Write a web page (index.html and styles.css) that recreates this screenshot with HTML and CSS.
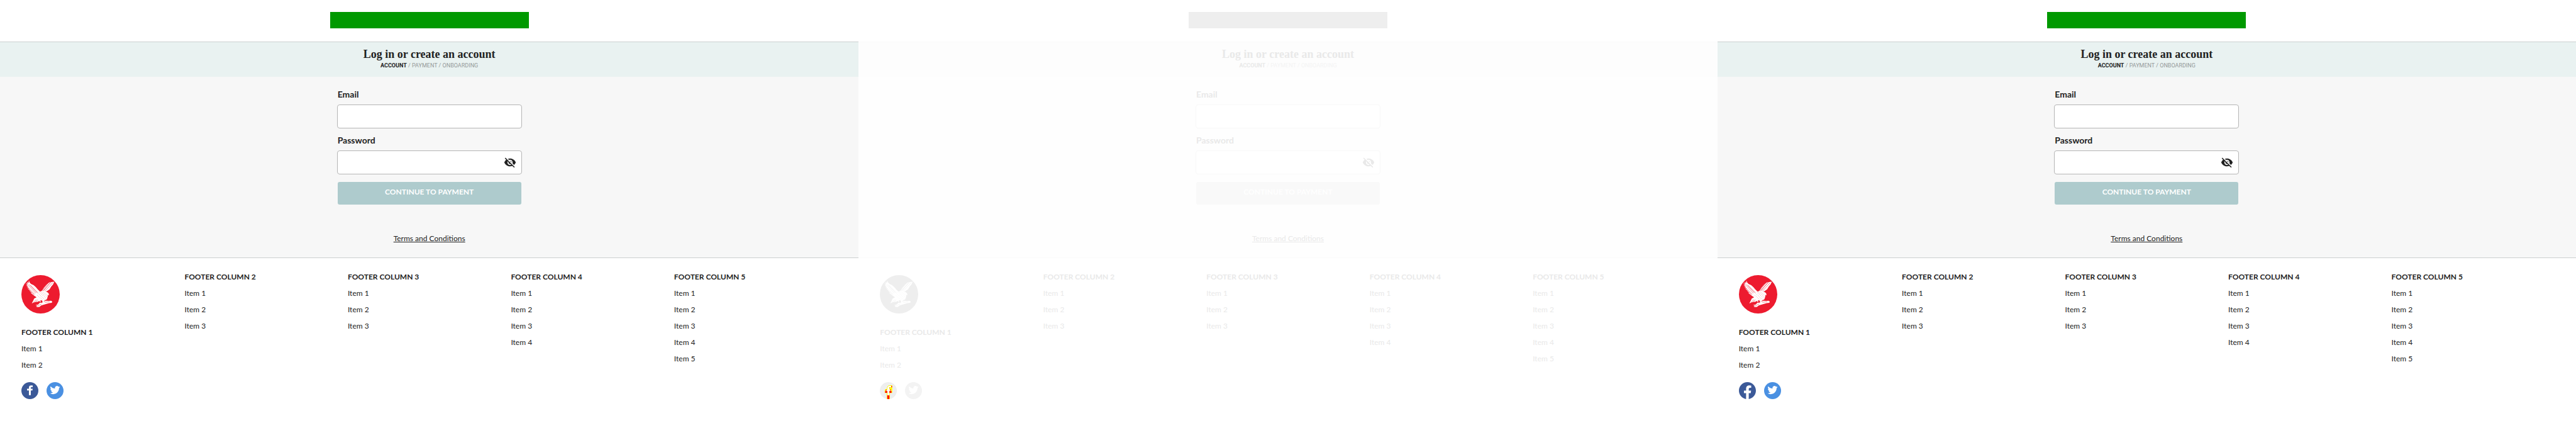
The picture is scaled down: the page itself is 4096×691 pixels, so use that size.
FILE: index.html
```html
<!DOCTYPE html>
<html lang="en">
<head>
<meta charset="utf-8">
<title>Log in or create an account</title>
<link rel="stylesheet" href="styles.css">
</head>
<body>
<svg class="sprite" aria-hidden="true">
  <symbol id="eagle" viewBox="0 0 72 72">
    <circle class="logo-disc" cx="36" cy="36" r="36"/>
    <g class="glyph">
      <path d="M14 10 15.5 14 18 16.5 23 19 27 22.500 31 27 35 31 38.500 29.500 43 30 48 31.500 51 34 52 38 50 37 49.500 40 48 45 44 47.500 42 49 43 52 40 50.500 38.500 47.500 36 47 36 51 33.500 48.500 31 50 27 50.500 24 51 19.500 53 22 48.500 24 44 28.500 41.500 24.500 39 20 35.500 17 32.500 20 33 14 28.500 17.500 29.500 11 25 15 26 9.500 21.500 13 22.500 8.500 18 12 19.500 7.500 14 11.500 17 11 12.500 13.500 15Z"/>
      <path d="M38 30 42 24 47 18 52 14 56.500 13 61.700 12.500 59.500 17.500 56 21.500 53 26.500 48 30 43 31.500Z"/>
      <path d="M26.500 56 31 55.500 35 51.500 38 52 42 49.500 46 48 51 48.500 56 48 58 50 57 52 52 52.500 47 54 42 55.500 37 57 34 59.500 30 60 27.500 59 30 57.500Z"/>
    </g>
    <g class="feathers">
      <path d="M12 18 27 34M14 17 29 33M10 21 25 36M17 19 31 33M12 26 24 37M40 30 56 13M42 29 54 14M44 30 59 14M39 29 51 14"/>
      <path class="speckle" d="M31 34 45 47M34 32 48 45M37 32 50 42M30 38 41 48M41 32 49 38"/>
      <path d="M28 46 22 52M31 46 26 51M30 58 38 54M44 51 53 50"/>
    </g>
  </symbol>
  <symbol id="eye-off" viewBox="0 0 24 24">
    <path d="M12 7c2.760 0 5 2.240 5 5 0 .650-.130 1.260-.360 1.830l2.920 2.920c1.510-1.260 2.700-2.890 3.430-4.750-1.730-4.390-6-7.500-11-7.500-1.400 0-2.740.250-3.980.700l2.160 2.160C10.740 7.130 11.350 7 12 7zM2 4.270l2.280 2.280.460.460C3.080 8.300 1.780 10.020 1 12c1.730 4.390 6 7.500 11 7.500 1.550 0 3.030-.300 4.380-.840l.420.420L19.730 22 21 20.730 3.270 3 2 4.270zM7.530 9.800l1.550 1.550c-.050.210-.080.430-.080.650 0 1.660 1.340 3 3 3 .220 0 .440-.030.650-.080l1.550 1.550c-.670.330-1.410.530-2.200.530-2.760 0-5-2.240-5-5 0-.790.200-1.530.530-2.200zm4.310-.780l3.150 3.150.020-.160c0-1.660-1.340-3-3-3l-.170.010z"/>
  </symbol>
  <symbol id="facebook-small" viewBox="0 0 32 32">
    <circle class="facebook-disc" cx="16" cy="16" r="16"/>
    <path class="glyph" d="M14.200 24.700V15.700H10.700V12.300H14.200V10.500C14.200 7.500 15.800 6.300 18.300 6.300H21.300V9.500H19.300C18.200 9.500 17.800 10 17.800 11V12.300H21.300L20.800 15.700H17.800V24.700Z"/>
  </symbol>
  <symbol id="facebook-full" viewBox="0 0 24 24">
    <path class="facebook-disc" d="M24 12.073c0-6.627-5.373-12-12-12s-12 5.373-12 12c0 5.990 4.388 10.954 10.125 11.854v-8.385H7.078v-3.470h3.047V9.430c0-3.007 1.792-4.669 4.533-4.669 1.312 0 2.686.235 2.686.235v2.953H15.830c-1.491 0-1.956.925-1.956 1.874v2.250h3.328l-.532 3.470h-2.796v8.385C19.612 23.027 24 18.062 24 12.073z"/>
  </symbol>
  <symbol id="facebook-diff" viewBox="0 0 32 32">
    <circle class="facebook-disc" cx="16" cy="16" r="16"/>
    <path class="diff-edge" d="M13 32V20.300H9.300V15L10.700 13H13.300V10.500L15 7.500 17 6H23.300V20.300H19V32Z"/>
    <path class="glyph" d="M14.300 25V16.500H11L14.300 13.500V10.500L16.500 7H21.300V9.500H18.500L17.700 11V13L22 16.500H18V25Z"/>
    <path class="diff-mark" d="M10 17H14V20H10ZM18 17H22V20H18ZM14 25H18V31L17 32H15L14 31ZM11 14.500H13.500L12.500 16H11ZM19 14H20.500V16H19ZM21.300 7H23V10H22ZM18 10H19V11H18Z"/>
  </symbol>
  <symbol id="twitter" viewBox="0 0 32 32">
    <circle class="twitter-disc" cx="16" cy="16" r="16"/>
    <path class="glyph" transform="translate(6.500 5.500) scale(.79)" d="M23.953 4.570a10 10 0 01-2.825.775 4.958 4.958 0 002.163-2.723c-.951.555-2.005.959-3.127 1.184a4.920 4.920 0 00-8.384 4.482C7.690 8.095 4.067 6.130 1.640 3.162a4.822 4.822 0 00-.666 2.475c0 1.710.870 3.213 2.188 4.096a4.904 4.904 0 01-2.228-.616v.060a4.923 4.923 0 003.946 4.827 4.996 4.996 0 01-2.212.085 4.936 4.936 0 004.604 3.417 9.867 9.867 0 01-6.102 2.105c-.390 0-.779-.023-1.170-.067a13.995 13.995 0 007.557 2.209c9.053 0 13.998-7.496 13.998-13.985 0-.210 0-.420-.015-.630A9.935 9.935 0 0024 4.590z"/>
  </symbol>
</svg>

<div class="panes">
  <section class="pane">
    <header class="topbar"><div class="brand-bar"></div></header>
    <div class="intro">
      <h1 class="title">Log in or create an account</h1>
      <p class="steps"><strong class="step-current">ACCOUNT</strong> / PAYMENT / ONBOARDING</p>
    </div>
    <main class="content">
      <form class="form">
        <div class="field"><label class="label" for="email-a">Email</label><input class="input" id="email-a" type="email"></div>
        <div class="field"><label class="label" for="password-a">Password</label>
          <div class="input-wrap"><input class="input" id="password-a" type="password"><button class="toggle" type="button" aria-label="Show password"><svg class="eye"><use href="#eye-off"/></svg></button></div>
        </div>
        <button class="submit" type="button">CONTINUE TO PAYMENT</button>
      </form>
      <a class="terms" href="#">Terms and Conditions</a>
    </main>
    <footer class="footer">
      <div class="column">
        <svg class="logo"><use href="#eagle"/></svg>
        <h2 class="heading">FOOTER COLUMN 1</h2>
        <ul class="list"><li><a class="item" href="#">Item 1</a></li><li><a class="item" href="#">Item 2</a></li></ul>
        <div class="social"><a class="social-link" href="#" aria-label="Facebook"><svg class="social-icon"><use href="#facebook-small"/></svg></a><a class="social-link" href="#" aria-label="Twitter"><svg class="social-icon"><use href="#twitter"/></svg></a></div>
      </div>
      <div class="column"><h2 class="heading">FOOTER COLUMN 2</h2>
        <ul class="list"><li><a class="item" href="#">Item 1</a></li><li><a class="item" href="#">Item 2</a></li><li><a class="item" href="#">Item 3</a></li></ul></div>
      <div class="column"><h2 class="heading">FOOTER COLUMN 3</h2>
        <ul class="list"><li><a class="item" href="#">Item 1</a></li><li><a class="item" href="#">Item 2</a></li><li><a class="item" href="#">Item 3</a></li></ul></div>
      <div class="column"><h2 class="heading">FOOTER COLUMN 4</h2>
        <ul class="list"><li><a class="item" href="#">Item 1</a></li><li><a class="item" href="#">Item 2</a></li><li><a class="item" href="#">Item 3</a></li><li><a class="item" href="#">Item 4</a></li></ul></div>
      <div class="column"><h2 class="heading">FOOTER COLUMN 5</h2>
        <ul class="list"><li><a class="item" href="#">Item 1</a></li><li><a class="item" href="#">Item 2</a></li><li><a class="item" href="#">Item 3</a></li><li><a class="item" href="#">Item 4</a></li><li><a class="item" href="#">Item 5</a></li></ul></div>
    </footer>
  </section>

  <section class="pane faded">
    <header class="topbar"><div class="brand-bar"></div></header>
    <div class="intro">
      <h1 class="title">Log in or create an account</h1>
      <p class="steps"><strong class="step-current">ACCOUNT</strong> / PAYMENT / ONBOARDING</p>
    </div>
    <main class="content">
      <form class="form">
        <div class="field"><label class="label" for="email-b">Email</label><input class="input" id="email-b" type="email"></div>
        <div class="field"><label class="label" for="password-b">Password</label>
          <div class="input-wrap"><input class="input" id="password-b" type="password"><button class="toggle" type="button" aria-label="Show password"><svg class="eye"><use href="#eye-off"/></svg></button></div>
        </div>
        <button class="submit" type="button">CONTINUE TO PAYMENT</button>
      </form>
      <a class="terms" href="#">Terms and Conditions</a>
    </main>
    <footer class="footer">
      <div class="column">
        <svg class="logo"><use href="#eagle"/></svg>
        <h2 class="heading">FOOTER COLUMN 1</h2>
        <ul class="list"><li><a class="item" href="#">Item 1</a></li><li><a class="item" href="#">Item 2</a></li></ul>
        <div class="social"><a class="social-link" href="#" aria-label="Facebook"><svg class="social-icon"><use href="#facebook-diff"/></svg></a><a class="social-link" href="#" aria-label="Twitter"><svg class="social-icon"><use href="#twitter"/></svg></a></div>
      </div>
      <div class="column"><h2 class="heading">FOOTER COLUMN 2</h2>
        <ul class="list"><li><a class="item" href="#">Item 1</a></li><li><a class="item" href="#">Item 2</a></li><li><a class="item" href="#">Item 3</a></li></ul></div>
      <div class="column"><h2 class="heading">FOOTER COLUMN 3</h2>
        <ul class="list"><li><a class="item" href="#">Item 1</a></li><li><a class="item" href="#">Item 2</a></li><li><a class="item" href="#">Item 3</a></li></ul></div>
      <div class="column"><h2 class="heading">FOOTER COLUMN 4</h2>
        <ul class="list"><li><a class="item" href="#">Item 1</a></li><li><a class="item" href="#">Item 2</a></li><li><a class="item" href="#">Item 3</a></li><li><a class="item" href="#">Item 4</a></li></ul></div>
      <div class="column"><h2 class="heading">FOOTER COLUMN 5</h2>
        <ul class="list"><li><a class="item" href="#">Item 1</a></li><li><a class="item" href="#">Item 2</a></li><li><a class="item" href="#">Item 3</a></li><li><a class="item" href="#">Item 4</a></li><li><a class="item" href="#">Item 5</a></li></ul></div>
    </footer>
  </section>

  <section class="pane">
    <header class="topbar"><div class="brand-bar"></div></header>
    <div class="intro">
      <h1 class="title">Log in or create an account</h1>
      <p class="steps"><strong class="step-current">ACCOUNT</strong> / PAYMENT / ONBOARDING</p>
    </div>
    <main class="content">
      <form class="form">
        <div class="field"><label class="label" for="email-c">Email</label><input class="input" id="email-c" type="email"></div>
        <div class="field"><label class="label" for="password-c">Password</label>
          <div class="input-wrap"><input class="input" id="password-c" type="password"><button class="toggle" type="button" aria-label="Show password"><svg class="eye"><use href="#eye-off"/></svg></button></div>
        </div>
        <button class="submit" type="button">CONTINUE TO PAYMENT</button>
      </form>
      <a class="terms" href="#">Terms and Conditions</a>
    </main>
    <footer class="footer">
      <div class="column">
        <svg class="logo"><use href="#eagle"/></svg>
        <h2 class="heading">FOOTER COLUMN 1</h2>
        <ul class="list"><li><a class="item" href="#">Item 1</a></li><li><a class="item" href="#">Item 2</a></li></ul>
        <div class="social"><a class="social-link" href="#" aria-label="Facebook"><svg class="social-icon"><use href="#facebook-full"/></svg></a><a class="social-link" href="#" aria-label="Twitter"><svg class="social-icon"><use href="#twitter"/></svg></a></div>
      </div>
      <div class="column"><h2 class="heading">FOOTER COLUMN 2</h2>
        <ul class="list"><li><a class="item" href="#">Item 1</a></li><li><a class="item" href="#">Item 2</a></li><li><a class="item" href="#">Item 3</a></li></ul></div>
      <div class="column"><h2 class="heading">FOOTER COLUMN 3</h2>
        <ul class="list"><li><a class="item" href="#">Item 1</a></li><li><a class="item" href="#">Item 2</a></li><li><a class="item" href="#">Item 3</a></li></ul></div>
      <div class="column"><h2 class="heading">FOOTER COLUMN 4</h2>
        <ul class="list"><li><a class="item" href="#">Item 1</a></li><li><a class="item" href="#">Item 2</a></li><li><a class="item" href="#">Item 3</a></li><li><a class="item" href="#">Item 4</a></li></ul></div>
      <div class="column"><h2 class="heading">FOOTER COLUMN 5</h2>
        <ul class="list"><li><a class="item" href="#">Item 1</a></li><li><a class="item" href="#">Item 2</a></li><li><a class="item" href="#">Item 3</a></li><li><a class="item" href="#">Item 4</a></li><li><a class="item" href="#">Item 5</a></li></ul></div>
    </footer>
  </section>
</div>
</body>
</html>
```
FILE: styles.css
```css
* { box-sizing: border-box; }

body {
  margin: 0;
  background: #fff;
  font-family: Lato, "Liberation Sans", sans-serif;
}

.sprite { display: none; }

.panes {
  display: flex;
  min-height: 100vh;
}

.pane {
  --ink: #222;
  --muted: #949999;
  --rule: #ccd0d0;
  --brand-bar: #009900;
  --intro: #e9f2f1;
  --surface: #f7f7f7;
  --outline: #b5b5b5;
  --button: #aecbcd;
  --logo: #ed1b2f;
  --facebook: #3b5998;
  --twitter: #4a90e2;
  flex: 1 1 0;
  min-width: 0;
  color: var(--ink);
  background: #fff;
}

.faded {
  --ink: #e9e9e9;
  --muted: #f4f4f4;
  --rule: #fafafa;
  --brand-bar: #eee;
  --intro: #fdfdfd;
  --surface: #fefefe;
  --outline: #f8f8f8;
  --button: #f9f9f9;
  --logo: #eee;
  --facebook: #eee;
  --twitter: #f3f3f3;
}

.topbar {
  display: flex;
  justify-content: center;
  padding: 19px 16px 21px;
  border-bottom: 1px solid var(--rule);
}

.brand-bar {
  width: 316px;
  height: 26px;
  background: var(--brand-bar);
}

.intro {
  padding: 9px 16px 12px;
  background: var(--intro);
  text-align: center;
}

.title {
  margin: 0 0 2px;
  font: 700 18px/20px "Liberation Serif", serif;
}

.steps {
  margin: 0;
  color: var(--muted);
  font: 400 9px/12px Roboto, sans-serif;
}

.step-current { color: var(--ink); }

.content {
  display: flex;
  flex-direction: column;
  align-items: center;
  gap: 45px;
  padding: 19px 16px 21px;
  background: var(--surface);
}

.form {
  display: flex;
  flex-direction: column;
  gap: 10px;
  width: 294px;
}

.field {
  display: flex;
  flex-direction: column;
  gap: 7px;
}

.label {
  padding-left: 1px;
  font-size: 14px;
  font-weight: 700;
  line-height: 18px;
}

.input-wrap { position: relative; }

.input {
  display: block;
  width: 100%;
  height: 38px;
  padding: 0 10px;
  border: 1px solid var(--outline);
  border-radius: 4px;
  background: #fff;
  color: var(--ink);
  font: inherit;
}

.toggle {
  position: absolute;
  top: 9px;
  right: 9px;
  padding: 0;
  border: 0;
  background: none;
  color: var(--ink);
}

.eye {
  display: block;
  width: 20px;
  height: 20px;
  fill: currentColor;
}

.submit {
  height: 36px;
  margin: 2px 1px 0;
  padding: 0 10px 4px;
  border: 0;
  border-radius: 3px;
  background: var(--button);
  color: #fff;
  font: 700 12px/18px Lato, "Liberation Sans", sans-serif;
}

.terms {
  color: var(--ink);
  font-size: 12px;
  line-height: 18px;
}

.footer {
  display: grid;
  grid-template-columns: repeat(5, 1fr);
  padding: 17px 34px;
  border-top: 1px solid var(--rule);
}

.logo {
  display: block;
  width: 61px;
  height: 61px;
  margin: 10px 0 17px;
}

.heading {
  margin: 0;
  font-size: 12px;
  font-weight: 700;
  line-height: 26px;
}

.list {
  margin: 0;
  padding: 0;
  font-size: 12px;
  line-height: 26px;
  list-style: none;
}

.item {
  color: inherit;
  text-decoration: none;
}

.social {
  display: flex;
  gap: 13px;
  padding-top: 14px;
}

.social-icon {
  display: block;
  width: 27px;
  height: 27px;
}

.glyph { fill: #fff; }
.logo-disc { fill: var(--logo); }
.facebook-disc { fill: var(--facebook); }
.twitter-disc { fill: var(--twitter); }
.feathers { fill: none; stroke: var(--logo); stroke-width: .6; }
.speckle { stroke-dasharray: 1 2; }
.diff-edge { fill: #ff0; }
.diff-mark { fill: #f00; }
```
